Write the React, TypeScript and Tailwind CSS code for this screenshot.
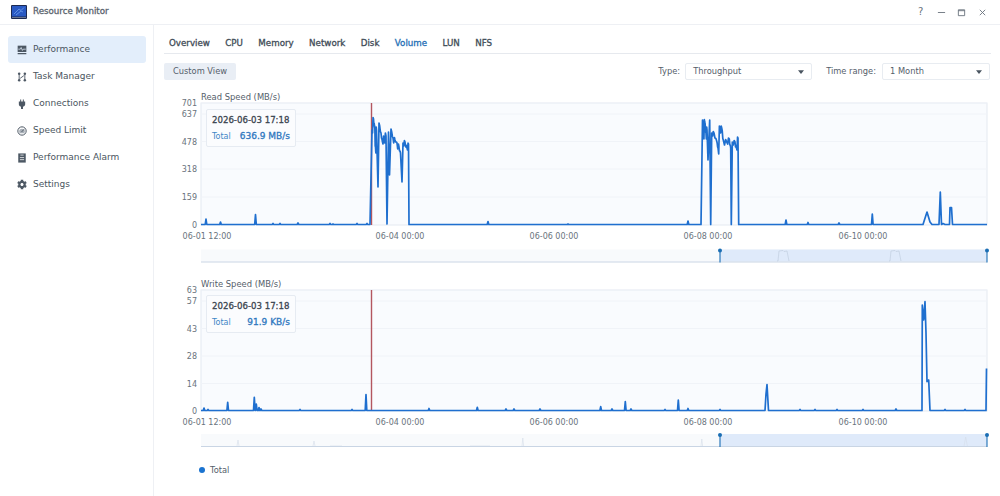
import React from 'react';
import { FaCog } from 'react-icons/fa';

type Pt = [number, number];

// tiny bumps on an otherwise flat baseline
const base = (from: number, to: number, y: number, bumps: Pt[]): Pt[] => {
    const out: Pt[] = [[from, y]];
    bumps.forEach(([x, top]) => {
        out.push([x - 0.8, y], [x, top], [x + 0.8, y]);
    });
    out.push([to, y]);
    return out;
};

// fixed noise for the busy plateaus, the real data is very jagged
const noisy = (pts: Pt[]): Pt[] => {
    const out: Pt[] = [];
    pts.forEach((p, i) => {
        out.push(p);
        const next = pts[i + 1];
        if (!next || Math.abs(next[1] - p[1]) > 25) return;
        const amp = [3, 5, 2, 6, 4][i % 5];
        out.push([p[0] + (next[0] - p[0]) * 0.35, p[1] + amp], [p[0] + (next[0] - p[0]) * 0.7, next[1] - amp * 0.5]);
    });
    return out;
};

const readLine: Pt[] = [
    ...base(201, 370, 224.5, [[206, 219], [220.5, 222], [255.5, 214.5], [273, 223.5], [280, 223.5], [298, 223], [330, 223.5], [333, 224], [357, 223.5], [367, 223.5]]),
    ...noisy([[372, 130], [373.5, 119], [374.5, 126], [375.5, 147], [376.5, 130]]),
    [378, 187],
    ...noisy([[379, 123], [381, 133], [382.5, 142], [384, 137], [386, 136]]),
    [387, 224],
    [388.5, 132], [389.5, 175],
    ...noisy([[391, 129], [393, 138], [395, 140], [397, 143], [399, 147], [400.5, 153]]),
    [402, 182],
    ...noisy([[403, 143], [405, 142], [407, 148], [408.5, 144]]),
    [409, 224.5],
    ...base(410, 701, 224.5, [[488, 221.5], [568, 224], [688, 221]]),
    ...noisy([[702.5, 120], [703.5, 134], [704.7, 122], [706, 133], [707, 130]]),
    [708, 160], [709.7, 120], [710.7, 224.5],
    ...noisy([[711.7, 133], [714, 133], [716.7, 141], [718, 148], [720, 129], [721.7, 128], [723.3, 140], [726.7, 142], [729.3, 139], [730.7, 148]]),
    [731.3, 224.5],
    ...noisy([[732.3, 142], [735, 142], [736.5, 148], [738, 138]]),
    [738.7, 224.5],
    ...base(740, 923, 224.5, [[786, 220], [808, 222.5], [839, 223], [872.3, 214]]),
    [927, 212], [930, 222], [932, 224.5], [939, 224.5], [940.3, 192], [941.5, 224.5], [943, 223.5], [945, 224.5], [949.5, 224.5], [950, 207.5], [951.5, 207.5], [952.5, 224.5], [987, 224.5],
];

const writeLine: Pt[] = [
    ...base(201, 765, 410.5, [[204, 408], [208, 409.5], [227.7, 402.3], [254.3, 397.3], [256.3, 404], [259, 407.5], [261, 409], [300, 409.5], [352, 409.5], [366, 394.5], [429, 408.5], [477.3, 407.3], [506, 409], [514, 409], [540, 409], [600.7, 406.7], [612, 409], [625.3, 401.7], [631, 409], [665, 409.5], [678.3, 400], [688, 408.5], [720, 409.5]]),
    [766, 394], [767, 384.5], [768.5, 410.5],
    ...base(769, 922, 410.5, [[800, 409.5], [815, 409.5], [837, 409.5], [863, 409.5], [896, 409]]),
    [922.3, 305], [923.7, 320], [925, 301.7], [926, 333], [927, 381.7], [928.7, 380], [930, 410.5],
    ...base(931, 986, 410.5, [[945, 409.5], [965, 409.5]]),
    [986.5, 368.5],
];

const toPoints = (pts: Pt[]) => pts.map(([x, y]) => `${x},${y}`).join(' ');

const navItems = [
    { label: 'Performance', icon: 'perf' },
    { label: 'Task Manager', icon: 'task' },
    { label: 'Connections', icon: 'plug' },
    { label: 'Speed Limit', icon: 'gauge' },
    { label: 'Performance Alarm', icon: 'alarm' },
    { label: 'Settings', icon: 'gear' },
];

const tabs = ['Overview', 'CPU', 'Memory', 'Network', 'Disk', 'Volume', 'LUN', 'NFS'];

const NavIcon = ({ name }: { name: string }) => {
    if (name === 'gear') return <FaCog className="w-[11px] h-[11px] text-[#4d5864]" />;
    return (
        <svg viewBox="0 0 12 12" className="w-[12px] h-[12px] text-[#4d5864]" fill="currentColor">
            {name === 'perf' && (
                <>
                    <rect x="0.8" y="0.8" width="10.4" height="7.6" />
                    <rect x="0.8" y="9.6" width="10.4" height="1.5" />
                    <path d="M1.5 5h2.5l1-2 1.5 3.5 1-1.5h3" fill="none" stroke="#e3eefb" strokeWidth="0.9" />
                </>
            )}
            {name === 'task' && (
                <>
                    <circle cx="2.6" cy="2.2" r="1.5" />
                    <circle cx="2.6" cy="9.8" r="1.5" />
                    <circle cx="9.4" cy="2.2" r="1.5" />
                    <circle cx="9.4" cy="9.8" r="1.5" />
                    <path d="M2.6 3v6M9.4 3v6M3.8 7.6l4.4-3.2" fill="none" stroke="currentColor" strokeWidth="1.1" />
                </>
            )}
            {name === 'plug' && (
                <path d="M3.8 0.5h1.2v2.5h2v-2.5h1.2v2.5h1.6v3.2c0 1.5-1.1 2.7-2.6 2.9v2.9h-2.4v-2.9c-1.5-.2-2.6-1.4-2.6-2.9v-3.2h1.6z" />
            )}
            {name === 'gauge' && (
                <>
                    <circle cx="6" cy="6" r="5" fill="none" stroke="currentColor" strokeWidth="1.2" />
                    <path d="M2.6 6.8a3.4 3.4 0 0 1 6.8 0l-.7 2h-5.4z" fill="#a9b0b8" />
                    <path d="M5.4 7.2l3-3.2" stroke="#4d5864" strokeWidth="1.1" />
                </>
            )}
            {name === 'alarm' && (
                <>
                    <path d="M1.5 .5h9v11h-9z" />
                    <path d="M4 2.5h4M3.5 5.5h5M3.5 8h5" stroke="#ffffff" strokeWidth="0.9" />
                </>
            )}
        </svg>
    );
};

const Caret = () => (
    <svg viewBox="0 0 8 5" className="w-[6px] h-[4px]">
        <path d="M0 0h8l-4 5z" fill="#4a5560" />
    </svg>
);

const Select = ({ value, width }: { value: string; width: string }) => (
    <div className={`${width} h-[17px] flex items-center justify-between pl-[7px] pr-[7px] bg-white border border-[#e8ecf1] rounded-[2px] text-[#55606b]`}>
        <span>{value}</span>
        <Caret />
    </div>
);

const Tooltip = ({ value, top }: { value: string; top: string }) => (
    <div className={`absolute left-[42px] ${top} w-[90px] h-[38px] px-[5px] bg-[#fbfcfe] border border-[#e6ebf2] rounded-[2px] flex flex-col justify-center gap-[5px] whitespace-nowrap text-[8.6px]`}>
        <div className="text-[#3b4651] leading-[11px] [-webkit-text-stroke:0.3px_#3b4651]">2026-06-03 17:18</div>
        <div className="flex justify-between leading-[11px]">
            <span className="text-[#3f87c6] text-[8px]">Total</span>
            <span className="text-[#2f78bf] text-[9px] [-webkit-text-stroke:0.3px_#2f78bf]">{value}</span>
        </div>
    </div>
);

type ChartProps = {
    title: string;
    top: number;
    bottom: number;
    height: number;
    ticks: [string, number][];
    line: Pt[];
    miniY: number;
    miniShape: React.ReactNode;
};

const xLabels: [string, number][] = [['06-01 12:00', 207], ['06-04 00:00', 400], ['06-06 00:00', 554], ['06-08 00:00', 708], ['06-10 00:00', 863]];

const Chart = ({ title, top, bottom, height, ticks, line, miniY, miniShape }: ChartProps) => (
    <svg viewBox={`164 ${top - 15} 836 ${height}`} className="block w-[836px]" style={{ height }} fontSize="8">
        <text x="201" y={top - 3.5} fill="#55606b" fontSize="8.4">{title}</text>
        <rect x="201" y={top} width="786" height={bottom - top} fill="#f9fbfe" stroke="#e4e9f1" strokeWidth="1" />
        {ticks.map(([label, y]) => (
            <g key={label}>
                {label !== '0' && <line x1="201" x2="987" y1={y} y2={y} stroke="#f0f3f8" />}
                <text x="197" y={y + 3} textAnchor="end" fill="#6a737d">{label}</text>
            </g>
        ))}
        {xLabels.map(([label, x]) => (
            <text key={label} x={x} y={bottom + 14} textAnchor="middle" fill="#6a737d">{label}</text>
        ))}
        <line x1="371.5" x2="371.5" y1={top} y2={bottom} stroke="#b3565f" strokeWidth="1.4" />
        <polyline points={toPoints(line)} fill="none" stroke="#1f6fcf" strokeWidth="1.7" strokeLinejoin="round" />
        {/* overview strip */}
        <rect x="201" y={miniY} width="786" height="12" fill="#f8fafc" />
        <rect x="720" y={miniY} width="267" height="12" fill="#dfeafa" />
        {miniShape}
        <line x1="201" x2="987" y1={miniY + 12.5} y2={miniY + 12.5} stroke="#c9d5e4" />
        {[720, 987].map((x) => (
            <g key={x}>
                <line x1={x} x2={x} y1={miniY} y2={miniY + 13} stroke="#1b6eb4" strokeWidth="1.1" />
                <circle cx={x} cy={miniY + 1} r="2" fill="#1b6eb4" />
            </g>
        ))}
    </svg>
);

const readMini = (
    <path d="M777 261h1l1-10 4-.5 1 1 3-.5 2 10M889 261h1l1-10 4-.5 1 1 3-.5 2 10" fill="none" stroke="#c2cfe0" strokeWidth="0.7" />
);

const writeMini = (
    <path d="M237 446l1-6 1 6M313 446l1-5 1 5M522 446l.8-8 .8 8M701 446l.8-7 .8 7M964 446l1.7-9 1.7 9M330 446h12M470 446h20" fill="none" stroke="#d5deea" strokeWidth="0.6" />
);

export default function App() {
    return (
        <div className="w-[1000px] h-[496px] overflow-hidden bg-white flex flex-col font-['DejaVu_Sans',sans-serif] text-[9px] text-[#4a5560]">
            {/* Title bar */}
            <div className="h-[25px] shrink-0 flex items-center justify-between pl-[11px] pr-[13px] border-b border-[#eef0f4]">
                <div className="flex items-center gap-[6px]">
                    <svg viewBox="0 0 16 14" className="w-[16px] h-[14px]">
                        <rect width="16" height="14" rx="1" fill="#1c2a52" />
                        <rect x="1" y="1" width="14" height="10.5" fill="#2a5ac4" />
                        <path d="M3 9l5-5 2 1.5 3-3M5 10l5-4 2 1" stroke="#6fa0ee" strokeWidth="0.8" fill="none" />
                        <rect x="1" y="12" width="14" height="1" fill="#6b7690" />
                    </svg>
                    <span className="text-[#5a646e] text-[8.7px] [-webkit-text-stroke:0.3px_#5a646e]">Resource Monitor</span>
                </div>
                <div className="flex items-center gap-[11.6px] text-[#6a737d]">
                    <span className="w-[9px] text-center text-[10px] leading-none">?</span>
                    <svg viewBox="0 0 10 10" className="w-[9px] h-[9px]"><path d="M1 5h8" stroke="#6a737d" strokeWidth="1" /></svg>
                    <svg viewBox="0 0 10 10" className="w-[9px] h-[9px]"><path d="M1.5 2h7v6.5h-7z M1.5 3h7" stroke="#6a737d" strokeWidth="1" fill="none" /></svg>
                    <svg viewBox="0 0 10 10" className="w-[9px] h-[9px]"><path d="M2 2l6 6M8 2l-6 6" stroke="#6a737d" strokeWidth="1" /></svg>
                </div>
            </div>

            <div className="flex flex-1 min-h-0">
                {/* Sidebar */}
                <aside className="w-[154px] shrink-0 border-r border-[#eef0f4] pt-[11px] px-[8px]">
                    {navItems.map((item, i) => (
                        <div key={item.label} className={`h-[27px] w-[138px] flex items-center gap-[6px] pl-[9px] rounded-[3px] ${i === 0 ? 'bg-[#e3eefb]' : ''}`}>
                            <span className="w-[10px] flex justify-center"><NavIcon name={item.icon} /></span>
                            <span>{item.label}</span>
                        </div>
                    ))}
                </aside>

                {/* Main */}
                <main className="flex-1 min-w-0 relative">
                    <div className="ml-[10px] mr-[9px] h-[29px] border-b border-[#e6e9ee] flex items-end gap-[15.4px] pb-[4px] pl-[5px] text-[8.7px] leading-[11px] text-[#414c57] [-webkit-text-stroke:0.3px_#414c57]">
                        {tabs.map((t) => (
                            <span key={t} className={t === 'Volume' ? 'text-[#1f6fb5] [-webkit-text-stroke:0.3px_#1f6fb5]' : ''}>{t}</span>
                        ))}
                    </div>

                    <div className="ml-[10px] mr-[10px] mt-[9px] h-[17px] flex items-center justify-between text-[8.3px]">
                        <div className="w-[72px] h-[17px] flex items-center justify-center bg-[#e9eef5] rounded-[2px] text-[#55606b]">Custom View</div>
                        <div className="flex items-center text-[#55606b]">
                            <span className="mr-[5px]">Type:</span>
                            <Select value="Throughput" width="w-[127px]" />
                            <span className="ml-[14px] mr-[6px]">Time range:</span>
                            <Select value="1 Month" width="w-[108px]" />
                        </div>
                    </div>

                    <div className="relative ml-[10px] mt-[8px]">
                        <Chart
                            title="Read Speed (MB/s)"
                            top={103}
                            bottom={225}
                            height={176}
                            ticks={[['701', 103], ['637', 114], ['478', 141.5], ['318', 169], ['159', 197], ['0', 224.5]]}
                            line={readLine}
                            miniY={249.5}
                            miniShape={readMini}
                        />
                        <Tooltip value="636.9 MB/s" top="top-[21px]" />
                    </div>

                    <div className="relative ml-[10px] mt-[11px]">
                        <Chart
                            title="Write Speed (MB/s)"
                            top={290}
                            bottom={411}
                            height={174}
                            ticks={[['63', 290], ['57', 301], ['43', 328.5], ['28', 356], ['14', 383.5], ['0', 410.5]]}
                            line={writeLine}
                            miniY={434}
                            miniShape={writeMini}
                        />
                        <Tooltip value="91.9 KB/s" top="top-[20px]" />
                    </div>

                    <div className="ml-[45px] mt-[15px] flex items-center gap-[5px] text-[8.3px] text-[#55606b]">
                        <span className="w-[6px] h-[6px] rounded-full bg-[#1a73d0]" />
                        <span>Total</span>
                    </div>
                </main>
            </div>
        </div>
    );
}
